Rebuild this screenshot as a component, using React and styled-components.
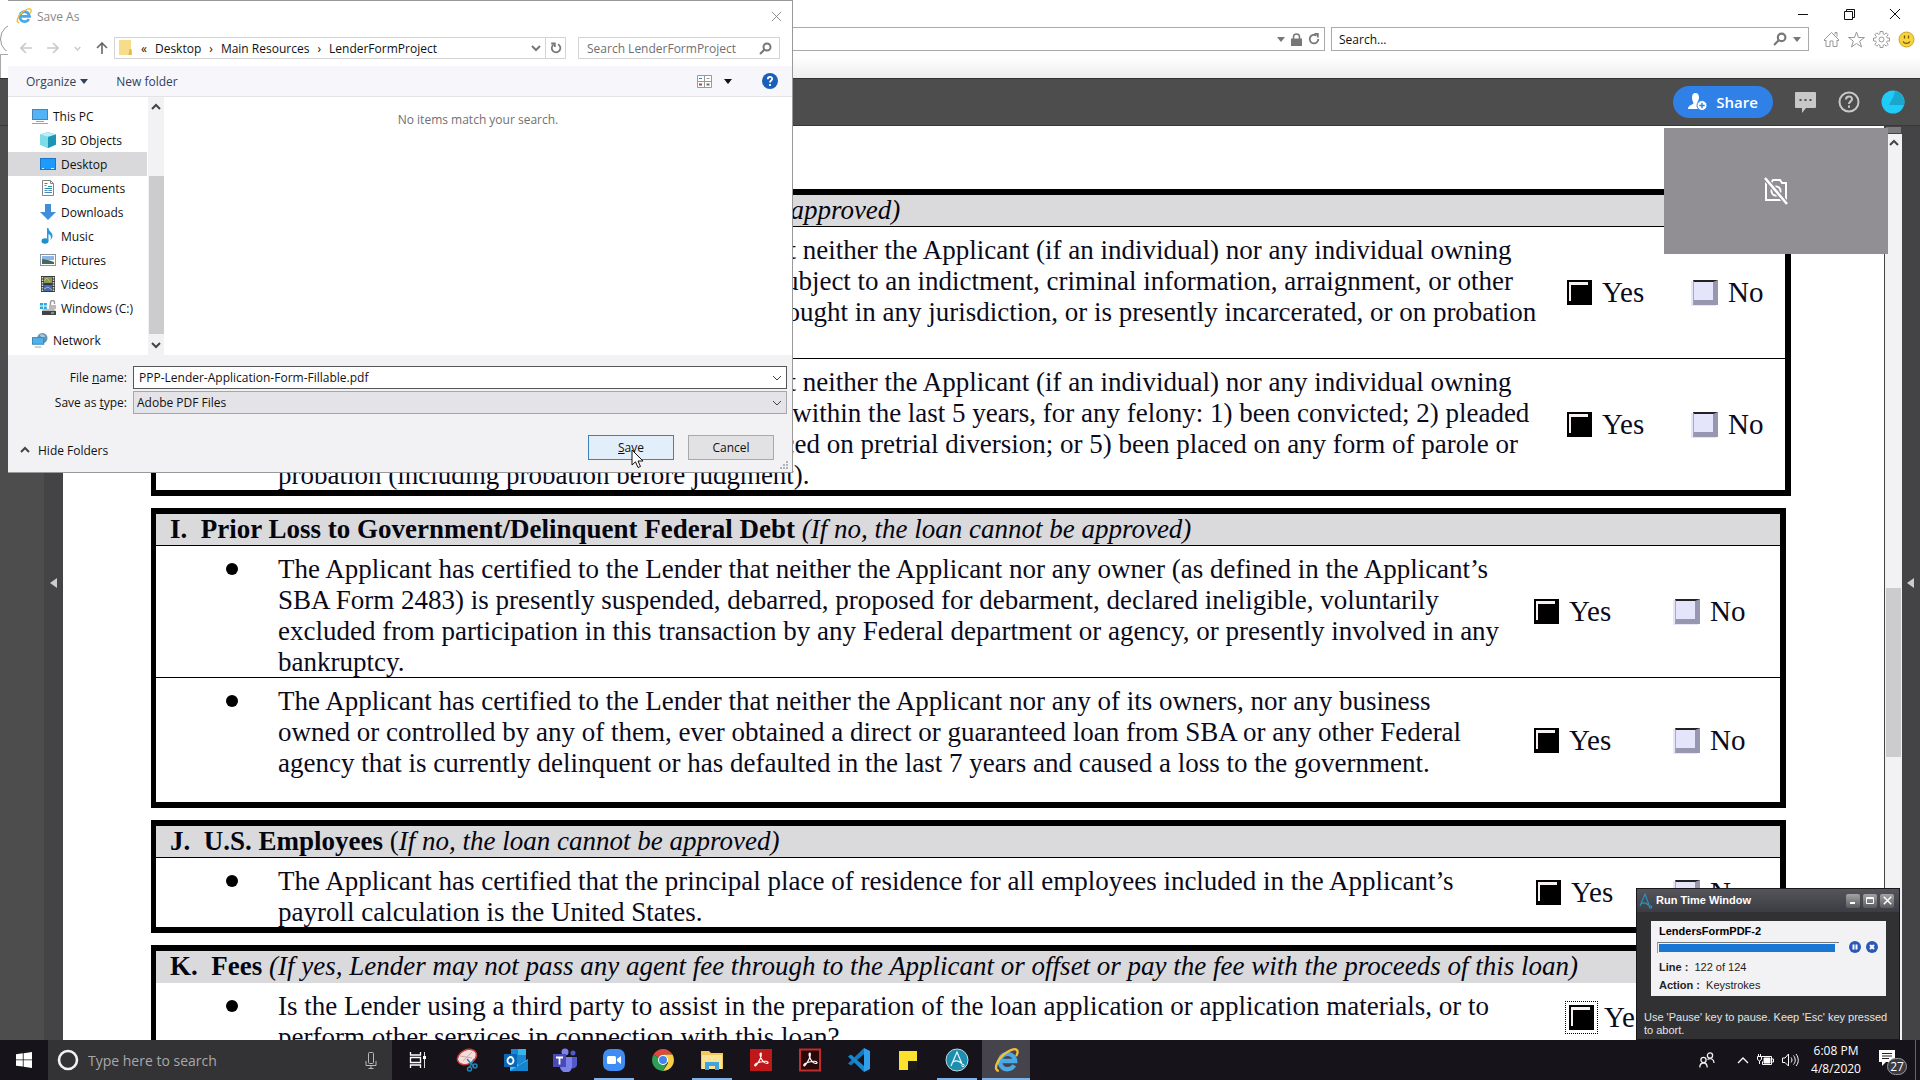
import styled, { createGlobalStyle, css } from "styled-components";

const GlobalStyle = createGlobalStyle`
  * {
    box-sizing: border-box;
  }

  body {
    margin: 0;
    overflow: hidden;
    background: #4d4d4d;
  }

  button,
  input,
  select {
    font: inherit;
    color: inherit;
    margin: 0;
    padding: 0;
    border: none;
    border-radius: 0;
    background: none;
    outline: none;
  }
`;

const uiFont = `"Open Sans", "Noto Sans", sans-serif`;

/* ---------- browser ---------- */

const Screen = styled.div`
  position: relative;
  display: flex;
  flex-direction: column;
  height: 100vh;
  overflow: hidden;
  font-family: ${uiFont};
  font-size: 12px;
`;

const TitleBar = styled.header`
  display: flex;
  justify-content: flex-end;
  height: 27px;
  padding-right: 2px;
  background: #fff;
`;

const WindowButton = styled.button`
  display: grid;
  place-items: center;
  width: 46px;
  height: 28px;
`;

const AddressRow = styled.div`
  display: flex;
  align-items: center;
  gap: 6px;
  height: 24px;
  padding-right: 4px;
  background: #fff;
`;

const BackButton = styled.button`
  width: 32px;
  height: 32px;
  flex: none;
  border: 1px solid #999;
  border-radius: 50%;
`;

const AddressBox = styled.div`
  display: flex;
  flex: ${(props) => props.$grow || "none"};
  width: ${(props) => props.$width || "auto"};
  align-items: center;
  justify-content: flex-end;
  gap: 6px;
  height: 24px;
  padding: 0 ${(props) => (props.$grow ? "4px" : "7px")};
  border: 1px solid #aaa;
  background: #fff;
`;

const AddressInput = styled.input`
  flex: 1;
  min-width: 0;

  &::placeholder {
    color: #111;
    opacity: 1;
  }
`;

const BrowserTools = styled.div`
  display: flex;
  gap: 5px;
  margin-left: 6px;
`;

const ToolButton = styled.button`
  display: grid;
  place-items: center;
  width: 20px;
  height: 24px;
`;

const TabStrip = styled.div`
  height: 27px;
  padding-top: 3px;
  background: linear-gradient(#fff 20%, #eeeeef);
`;

const BrowserTab = styled.div`
  width: 260px;
  height: 24px;
  border: 1px solid #aaa;
  border-bottom: none;
  background: #fff;
`;

const ViewerBar = styled.div`
  display: flex;
  align-items: center;
  justify-content: flex-end;
  height: 48px;
  padding-right: 15px;
  border-top: 1px solid #333;
  border-bottom: 1px solid #383838;
  background: #4d4d4d;
`;

const ShareButton = styled.button`
  display: flex;
  align-items: center;
  justify-content: center;
  gap: 8px;
  width: 100px;
  height: 32px;
  margin-right: 20px;
  border-radius: 16px;
  background: #2f80e7;
  color: #fff;
  font-size: 15px;
  font-weight: 600;
`;

const BarButton = styled.button`
  display: grid;
  place-items: center;
  width: 24px;
  height: 24px;
  margin-right: 20px;

  &:last-child {
    margin-right: 0;
  }
`;

/* ---------- document ---------- */

const Viewer = styled.div`
  display: flex;
  flex: 1;
  min-height: 0;
`;

const Rail = styled.div`
  display: flex;
  align-items: center;
  justify-content: flex-end;
  flex: none;
  width: ${(props) => props.$width};
  padding-right: 6px;
  background: ${(props) => props.$bg || "#444446"};
`;

const Page = styled.main`
  flex: 1;
  min-width: 0;
  overflow: hidden;
  padding: 63px 93px 0 88px;
  border-right: 1px solid #444;
  background: #fff;
  color: #0a0a1c;
  font-family: "Liberation Serif", serif;
  font-size: 27px;
  line-height: 31px;
`;

const Section = styled.section`
  margin: 0 ${(props) => (props.$wide ? "0" : "5px")} 12px 0;
  border: 6px solid #000;
  border-left-width: 5px;
`;

const SectionTitle = styled.h2`
  height: 32px;
  margin: 0;
  padding-left: 14px;
  border-bottom: ${(props) => (props.$plain ? "none" : "1px solid #000")};
  background: #dadadc;
  font-size: 27px;
  font-weight: 700;
  line-height: 31px;
  white-space: pre;
  color: #05050f;

  em,
  span {
    font-weight: 400;
  }
`;

const Statement = styled.div`
  position: relative;
  display: flex;
  align-items: center;
  justify-content: space-between;
  min-height: ${(props) => props.$minHeight || "0"};

  & + & {
    border-top: 1px solid #000;
  }

  &::before {
    content: "";
    position: absolute;
    top: 17px;
    left: 70px;
    width: 12px;
    height: 12px;
    border-radius: 50%;
    background: #000;
  }
`;

const StatementText = styled.p`
  align-self: flex-start;
  margin: 0 0 -1px;
  padding: 8px 0 0 122px;
  white-space: nowrap;
`;

const Choices = styled.div`
  display: grid;
  flex: none;
  grid-template-columns: ${(props) => props.$columns};
  font-size: 29px;
`;

const Choice = styled.label`
  display: flex;
  align-items: center;
  gap: 10px;
`;

const Check = styled.input`
  appearance: none;
  width: 25px;
  height: 25px;
  border: solid #9797b2;
  border-width: 2px 5px 5px 1px;
  border-top-color: #222;
  border-left-color: #a9a9c0;
  background: #e4e4fb;
  box-shadow: -2px 1px 0 #e6e6fa;

  &:checked {
    border-color: #000;
    border-width: 2px 4px 4px 2px;
    background: #000;
    box-shadow: inset 2px 3px 0 #f8f0f0;
  }

  ${(props) =>
    props.$focused &&
    css`
      outline: 1px dotted #000;
      outline-offset: 3px;
    `}
`;

const ScrollTrack = styled.div`
  display: flex;
  flex-direction: column;
  align-items: center;
  flex: none;
  width: ${(props) => props.$width};
  background: #f2f1f4;
`;

const SplitBox = styled.div`
  align-self: stretch;
  height: 8px;
  margin-bottom: 4px;
  border: 1px solid #444;
  background: #7b7b7b;
`;

const ScrollThumb = styled.div`
  width: 15px;
  height: ${(props) => props.$height};
  margin-top: ${(props) => props.$top};
  background: #cccbcd;
`;

/* ---------- save dialog ---------- */

const Dialog = styled.section`
  position: absolute;
  top: 0;
  left: 8px;
  display: flex;
  flex-direction: column;
  width: 785px;
  height: 473px;
  border: 1px solid #999;
  border-left: none;
  background: #fff;
  color: #111;
`;

const DialogTitle = styled.div`
  display: flex;
  align-items: center;
  gap: 5px;
  height: 30px;
  margin-bottom: 6px;
  padding: 0 8px;
  color: #888;
`;

const CloseButton = styled.button`
  display: grid;
  place-items: center;
  width: 16px;
  height: 16px;
  margin-left: auto;
`;

const PathRow = styled.div`
  display: flex;
  align-items: center;
  height: 22px;
  margin-bottom: 7px;
  padding-right: 12px;
`;

const NavButtons = styled.div`
  display: flex;
  align-items: center;
  justify-content: space-between;
  width: 106px;
  padding: 0 6px 0 12px;
`;

const IconButton = styled.button`
  display: grid;
  place-items: center;
`;

const PathBox = styled.div`
  display: flex;
  flex: 1;
  align-items: center;
  gap: 8px;
  height: 22px;
  margin-right: 12px;
  padding-left: 4px;
  border: 1px solid #d4d4d6;
`;

const PathEnd = styled.div`
  display: flex;
  align-items: center;
  margin-left: auto;
`;

const Refresh = styled.button`
  display: grid;
  place-items: center;
  width: 20px;
  height: 20px;
  margin-left: 4px;
  border-left: 1px solid #d4d4d6;
`;

const SearchBox = styled.label`
  display: flex;
  align-items: center;
  width: 202px;
  height: 22px;
  padding: 0 7px 0 8px;
  border: 1px solid #d4d4d6;

  input {
    flex: 1;
    min-width: 0;
  }

  input::placeholder {
    color: #707074;
    opacity: 1;
  }
`;

const CommandBar = styled.div`
  display: flex;
  align-items: center;
  height: 31px;
  padding: 0 14px 0 18px;
  border-bottom: 1px solid #e4e4e6;
  background: #f7f6fa;
  color: #33405c;
`;

const Command = styled.button`
  display: flex;
  align-items: center;
  gap: ${(props) => props.$gap || "4px"};
  margin-right: ${(props) => props.$after || "0"};
`;

const Spacer = styled.div`
  flex: 1;
`;

const Browse = styled.div`
  display: flex;
  flex: 1;
  min-height: 0;
`;

const Tree = styled.nav`
  width: 140px;
  padding: 7px 1px 0 0;
`;

const TreeItem = styled.a`
  display: flex;
  align-items: center;
  gap: 5px;
  height: 24px;
  margin-top: ${(props) => (props.$spaced ? "8px" : "0")};
  padding-left: ${(props) => (props.$top ? "24px" : "32px")};
  background: ${(props) => (props.$active ? "#d9d9db" : "none")};
  color: inherit;
  text-decoration: none;
  white-space: nowrap;
`;

const FileList = styled.div`
  flex: 1;
  padding-top: 14px;
  text-align: center;
  color: #707074;

  p {
    margin: 0;
  }
`;

const Footer = styled.div`
  height: 117px;
  padding: 11px 5px 0 0;
  background: #f2f1f4;
`;

const Field = styled.div`
  position: relative;
  display: flex;
  align-items: center;
  margin-bottom: 2px;

  label {
    width: 125px;
    padding-right: 6px;
    text-align: right;
  }

  svg {
    position: absolute;
    top: 7px;
    right: 5px;
    pointer-events: none;
  }
`;

const FileInput = styled.input`
  flex: 1;
  height: 23px;
  padding-left: 5px;
  border: 1px solid #555;
  background: #fff;
`;

const TypeSelect = styled.select`
  flex: 1;
  height: 23px;
  padding-left: 3px;
  appearance: none;
  border: 1px solid #a6a6aa;
  background: #e4e3e8;
`;

const DialogActions = styled.div`
  display: flex;
  align-items: flex-start;
  gap: 14px;
  padding: 19px 13px 0 12px;
`;

const DialogButton = styled.button`
  width: 86px;
  height: 25px;
  border: 1px solid ${(props) => (props.$primary ? "#3b82bd" : "#a9a9ad")};
  background: ${(props) => (props.$primary ? "#e2effb" : "#e2e1e4")};
`;

const HideFolders = styled.button`
  display: flex;
  align-items: center;
  gap: 8px;
  height: 30px;
  margin-right: auto;
`;

const Grip = styled.svg`
  position: absolute;
  right: 3px;
  bottom: 2px;
`;

const Pointer = styled.svg`
  position: absolute;
  top: 449px;
  left: 631px;
`;

/* ---------- overlays ---------- */

const CameraPanel = styled.aside`
  position: absolute;
  top: 128px;
  right: 32px;
  display: grid;
  place-items: center;
  width: 224px;
  height: 126px;
  background: #918f94;
`;

const RunWindow = styled.aside`
  position: absolute;
  right: 20px;
  bottom: 40px;
  width: 264px;
  height: 152px;
  border: 1px solid #18181a;
  background: #313133;
  color: #e4e4e4;
  font-family: "Liberation Sans", sans-serif;
  font-size: 11px;
  line-height: 13px;
`;

const RunTitle = styled.div`
  display: flex;
  align-items: center;
  gap: 3px;
  height: 23px;
  padding: 0 5px 0 2px;
  background: linear-gradient(#55555b, #3c3c44);
  color: #fff;
  font-weight: 700;
`;

const RunTitleText = styled.span`
  flex: 1;
`;

const RunButton = styled.button`
  display: grid;
  place-items: center;
  width: 14px;
  height: 14px;
  border-radius: 2px;
  background: linear-gradient(#a4a4a6, #5a5a5e);
`;

const RunPanel = styled.div`
  display: flex;
  flex-direction: column;
  gap: 5px;
  height: 75px;
  margin: 9px 13px 15px 14px;
  padding: 4px 8px 0;
  background: #f2f1f4;
  color: #222;
`;

const RunName = styled.strong`
  color: #000;
`;

const ProgressRow = styled.div`
  display: flex;
  align-items: center;
  gap: 5px;
  height: 10px;
  margin: -1px 0 4px;
`;

const ProgressTrack = styled.div`
  flex: 1;
  height: 11px;
  margin: 0 5px 0 -2px;
  padding: 1px;
  border-top: 1px solid #777;
  border-left: 1px solid #999;
`;

const ProgressFill = styled.div`
  height: 8px;
  background: #1976d2;
`;

const RunNote = styled.p`
  margin: 0;
  padding-left: 7px;
  white-space: nowrap;
`;

/* ---------- taskbar ---------- */

const Taskbar = styled.footer`
  display: flex;
  flex: none;
  height: 40px;
  background: #16131b;
  color: #fff;
`;

const StartButton = styled.button`
  display: grid;
  place-items: center;
  width: 48px;
`;

const TaskSearch = styled.label`
  display: flex;
  align-items: center;
  gap: 9px;
  width: 344px;
  margin-right: 2px;
  padding: 0 15px 0 9px;
  background: #333335;
  font-size: 14px;

  input {
    flex: 1;
    min-width: 0;
  }

  input::placeholder {
    color: #a8a8aa;
    opacity: 1;
  }
`;

const Apps = styled.div`
  display: flex;
  flex: 1;
  gap: 1px;
`;

const AppButton = styled.button`
  position: relative;
  display: grid;
  place-items: center;
  width: 48px;
  height: 40px;
  background: ${(props) => (props.$active ? "#45434b" : "none")};

  ${(props) =>
    props.$open &&
    css`
      &::after {
        content: "";
        position: absolute;
        right: ${props.$active ? "0" : "4px"};
        bottom: 0;
        left: ${props.$active ? "0" : "4px"};
        height: 2px;
        background: #7db2ea;
      }
    `}
`;

const Tray = styled.div`
  display: flex;
  align-items: center;
  gap: 8px;
  border-right: 1px solid #666;
  margin-right: 4px;
  padding-right: 9px;
`;

const Clock = styled.div`
  width: 60px;
  margin: 0 4px 0 -1px;
  text-align: center;
  line-height: 18px;
`;

const People = styled.div`
  display: grid;
  margin-right: 14px;
`;

const Notify = styled.button`
  position: relative;
  width: 28px;
  height: 28px;
  text-align: left;
`;

const Badge = styled.span`
  position: absolute;
  right: -1px;
  bottom: -1px;
  width: 20px;
  height: 17px;
  border: 1px solid #999;
  border-radius: 9px;
  background: #3a3a40;
  font-size: 12px;
  line-height: 15px;
  text-align: center;
`;

/* ---------- icons ---------- */

const Chevron = ({ up, size = 10, color = "#444", width = 1 }) => (
  <svg width={size} height={size} viewBox="0 0 10 10" fill="none" stroke={color} strokeWidth={width}>
    <path d={up ? "M1 7l4-4 4 4" : "M1 3l4 4 4-4"} />
  </svg>
);

const Triangle = ({ color = "#33405c" }) => (
  <svg width="8" height="5" viewBox="0 0 8 5" fill={color}>
    <path d="M0 0h8L4 5z" />
  </svg>
);

const SideArrow = () => (
  <svg width="7" height="10" viewBox="0 0 7 10" fill="#ccc">
    <path d="M7 0v10L0 5z" />
  </svg>
);

const Cross = ({ size = 12, color = "#888", width = 1 }) => (
  <svg width={size} height={size} viewBox="0 0 12 12" stroke={color} strokeWidth={width}>
    <path d="M1 1l10 10M11 1L1 11" />
  </svg>
);

const Magnifier = ({ size = 13, color = "#777" }) => (
  <svg width={size} height={size} viewBox="0 0 13 13" fill="none" stroke={color} strokeWidth="2">
    <circle cx="8" cy="5" r="3.5" />
    <path d="M5.5 7.5L1 12" />
  </svg>
);

const ReloadIcon = ({ color = "#777" }) => (
  <svg width="12" height="12" viewBox="0 0 12 12" fill="none" stroke={color} strokeWidth="1.8">
    <path d="M8.500 2.600A4.300 4.300 0 1 0 10.300 6" />
    <path d="M6.400 0.800h3.400v3.600" />
  </svg>
);

const RefreshIcon = () => (
  <svg width="12" height="12" viewBox="0 0 12 12" fill="none" stroke="#777" strokeWidth="1.800">
    <path d="M3.500 2.600A4.300 4.300 0 1 0 8 2.200" />
    <path d="M1.200 1.500h3.600v3.600" />
  </svg>
);

const IeIcon = ({ size }) => (
  <svg width={size} height={size} viewBox="0 0 26 26" fill="none">
    <path d="M21 18a8 8 0 1 1 1-4.500H8" stroke="#4aa9e4" strokeWidth="4.500" />
    <path d="M5 24C-1 23 3 13 10 7S25-1 24.500 4.500c0 1.500-.5 2.500-1.500 4" stroke="#f3c03c" strokeWidth="2.400" />
  </svg>
);

const ArrowIcon = ({ d, color }) => (
  <svg width="12" height="12" viewBox="0 0 12 12" fill="none" stroke={color} strokeWidth="1.600">
    <path d={d} />
  </svg>
);

const MonitorIcon = ({ desktop }) =>
  desktop ? (
    <svg width="16" height="14" viewBox="0 0 16 14">
      <rect x="0.500" y="1.500" width="15" height="11" fill="#1e9bff" stroke="#1976c8" />
      <path d="M2 11.500h2M11 11.500h3" stroke="#d8efff" />
    </svg>
  ) : (
    <svg width="16" height="16" viewBox="0 0 16 16">
      <rect x="0.500" y="1.500" width="15" height="10" fill="#52b4f6" stroke="#4a83ad" />
      <path d="M4 13.500h8M0 15.500h16" stroke="#8fa5b5" />
    </svg>
  );

const CubeIcon = () => (
  <svg width="16" height="16" viewBox="0 0 16 16">
    <path d="M8 0l8 2.500v10L8 16l-8-3.500v-10z" fill="#2bb3cf" />
    <path d="M0 2.500L8 5v11l-8-3.500z" fill="#7fdbe8" />
    <path d="M0 2.500L8 0l8 2.500L8 5z" fill="#bdeef4" />
    <path d="M8 5l8-2.500v10L8 16z" fill="#1b95b4" />
  </svg>
);

const DocumentIcon = () => (
  <svg width="16" height="16" viewBox="0 0 16 16">
    <path d="M2.500.500h8l3 3v12h-11z" fill="#fff" stroke="#858585" />
    <path d="M10.500.500v3h3" fill="none" stroke="#858585" />
    <path d="M4.500 3.500h3M4.500 5.500h2M8 6.500h4M4.500 8.500h7.500" stroke="#2b8fa8" />
    <path d="M4.500 10.500h3M8.500 10.500H12M4.500 12.500h7.500" stroke="#4e8ac0" />
  </svg>
);

const DownloadIcon = () => (
  <svg width="16" height="16" viewBox="0 0 16 16">
    <path d="M5 0h6v8h5l-8 8-8-8h5z" fill="#3f8edb" />
  </svg>
);

const MusicIcon = () => (
  <svg width="16" height="16" viewBox="0 0 16 16">
    <ellipse cx="5" cy="13" rx="3.500" ry="2.800" fill="#1d8fcf" />
    <path d="M7 0h1.500c0 3.500 4.500 4 4 8.500-.3 1.500-1 2.500-2 3.500 1-3.500 0-5-2-6v7H7z" fill="#2a9ad8" />
  </svg>
);

const PictureIcon = () => (
  <svg width="16" height="12" viewBox="0 0 16 12">
    <rect x="0.500" y="0.500" width="15" height="11" fill="#fff" stroke="#8a94a0" />
    <rect x="2" y="2" width="12" height="4" fill="#8db5e8" />
    <path d="M2 5l6 1 6 2v2H2z" fill="#45695f" />
  </svg>
);

const VideoIcon = () => (
  <svg width="16" height="16" viewBox="-1 0 16 16">
    <rect width="14" height="16" fill="#3a3a3c" />
    <path d="M1.500 1v14M12.500 1v14" stroke="#ddd" strokeWidth="1.500" strokeDasharray="1.500 1" />
    <rect x="3" y="1" width="8" height="6" fill="#8a9a50" />
    <rect x="3" y="9" width="8" height="6" fill="#4167b8" />
    <path d="M3 5l3-3 3 4M3 13l4-2 4 3" stroke="#b4c07c" fill="none" />
  </svg>
);

const DriveIcon = () => (
  <svg width="16" height="16" viewBox="0 0 16 16">
    <path d="M0 3h3v2.500H0zM3.800 3h3v2.500h-3zM0 6.500h3V9H0zM3.800 6.500h3V9h-3z" fill="#25a8de" />
    <path d="M10.500 5V2.500a2 2 0 0 1 4 0V4" fill="none" stroke="#9a9a9a" strokeWidth="1.400" />
    <path d="M9 5h7v4H9zM3 9h11l2 2H2z" fill="#bbb" />
    <rect x="2" y="11" width="14" height="4" fill="#444" />
    <rect x="11" y="12.500" width="3" height="1" fill="#b6ecd0" />
  </svg>
);

const NetworkIcon = () => (
  <svg width="16" height="16" viewBox="0 0 17 16">
    <circle cx="11" cy="6" r="5.500" fill="#6792ad" />
    <path d="M8 3c2-2 5-1 6 1l-2 3z" fill="#a4cadb" />
    <rect x="0.500" y="5.500" width="12" height="7" fill="#4db0ef" stroke="#3d83b4" />
    <path d="M3 15.500h7" stroke="#8fa5b5" />
  </svg>
);

const AppIcon = ({ children }) => (
  <svg width="24" height="24" viewBox="0 0 24 24" fill="none">
    {children}
  </svg>
);

const AcrobatMark = () => (
  <path
    d="M12 5c-1.500 0-1 3 .5 6s4 4.500 5.500 4.500 1.500-2-1-2.200S8 14.500 6.500 16s-.5 2.500.6 1.400C9 15.500 13.500 8 12 5z"
    stroke="#fff"
    strokeWidth="1.200"
  />
);

const taskApps = [
  {
    name: "Task View",
    icon: (
      <AppIcon>
        <path d="M4.500 4v3h10V4M4.500 20v-3h10v3M4.500 9.500h10v5h-10z" stroke="#fff" strokeWidth="1.300" />
        <path d="M18.500 4v16" stroke="#ddd" />
        <path d="M17 8h3v3h-3z" fill="#fff" />
      </AppIcon>
    ),
  },
  {
    name: "Snipping Tool",
    icon: (
      <AppIcon>
        <ellipse cx="12" cy="9" rx="10" ry="7" transform="rotate(-25 12 9)" fill="#f3dedd" stroke="#c9413c" strokeWidth="1.500" />
        <path d="M5 8l12 2M8 13l9-9" stroke="#d0a8a8" />
        <path d="M12 11l7 8M19 11l-5 9" stroke="#2585b5" strokeWidth="1.500" />
        <circle cx="14.500" cy="21" r="2" stroke="#2585b5" strokeWidth="1.500" />
        <circle cx="20" cy="18" r="2" stroke="#2585b5" strokeWidth="1.500" />
      </AppIcon>
    ),
  },
  {
    name: "Outlook",
    icon: (
      <AppIcon>
        <path d="M7 1h15v16H7z" fill="#1b87d4" />
        <path d="M14 1h8v6h-8z" fill="#35b6ef" />
        <path d="M6 12l9 5 9-6v12H6z" fill="#42bdf0" />
        <path d="M6 23l18-11v11z" fill="#1683ce" />
        <rect y="6" width="13" height="13" fill="#0b66b5" />
        <ellipse cx="6.500" cy="12.500" rx="3" ry="3.500" stroke="#fff" strokeWidth="1.800" />
      </AppIcon>
    ),
  },
  {
    name: "Teams",
    icon: (
      <AppIcon>
        <circle cx="12" cy="4" r="3.500" fill="#7b83eb" />
        <circle cx="20" cy="5" r="2.500" fill="#5059c9" />
        <path d="M15 9h9v7a4 4 0 0 1-7 3z" fill="#5059c9" />
        <path d="M6 9h13v9a6 6 0 0 1-12 1z" fill="#7b83eb" />
        <rect y="6" width="13" height="13" fill="#464bb5" />
        <path d="M3 9.500h7M6.500 9.500v7" stroke="#fff" strokeWidth="1.800" />
      </AppIcon>
    ),
  },
  {
    name: "Zoom",
    open: true,
    icon: (
      <AppIcon>
        <rect x="1" y="1" width="22" height="22" rx="7" fill="#3f8cf4" />
        <rect x="5" y="8" width="9" height="8" rx="1.500" fill="#fff" />
        <path d="M15 11l4-3v8l-4-3z" fill="#fff" />
      </AppIcon>
    ),
  },
  {
    name: "Chrome",
    icon: (
      <AppIcon>
        <path d="M12 12L2.500 6.500A11 11 0 0 1 21.500 6.500H12z" fill="#dc4a3d" />
        <path d="M12 12L2.500 6.500A11 11 0 0 0 12 23l4-8z" fill="#2f9e55" />
        <path d="M12 6.500h9.500A11 11 0 0 1 12 23l5-8z" fill="#f6cf46" />
        <circle cx="12" cy="12" r="5" fill="#fff" />
        <circle cx="12" cy="12" r="4" fill="#4286ec" />
      </AppIcon>
    ),
  },
  {
    name: "File Explorer",
    open: true,
    icon: (
      <AppIcon>
        <path d="M1 3h8l2 2h12v16H1z" fill="#f2c85c" />
        <path d="M2 7h20v14H2z" fill="#fbe394" />
        <path d="M5 14h14v8h-4v-4H9v4H5z" fill="#3fa3df" />
      </AppIcon>
    ),
  },
  {
    name: "Acrobat Reader",
    icon: (
      <AppIcon>
        <rect x="1" y="1" width="22" height="22" fill="#c01818" />
        <AcrobatMark />
      </AppIcon>
    ),
  },
  {
    name: "Acrobat DC",
    icon: (
      <AppIcon>
        <rect x="2" y="1.500" width="20" height="21" fill="#2a0808" stroke="#c12c2c" strokeWidth="2" />
        <AcrobatMark />
      </AppIcon>
    ),
  },
  {
    name: "Visual Studio Code",
    icon: (
      <AppIcon>
        <path d="M17 0l6 3v18l-6 3z" fill="#2fa0ec" />
        <path d="M17 0v6L4 17.500 1 15.500z" fill="#1479bf" />
        <path d="M17 24v-6L4 6.500 1 8.500z" fill="#1987d0" />
      </AppIcon>
    ),
  },
  {
    name: "Sticky Notes",
    icon: (
      <AppIcon>
        <path d="M3 3h18v19H3z" fill="#fbe12e" />
        <path d="M12 13h9v9z" fill="#fff27a" />
        <path d="M21 13v9h-9v-9h9l-9 9z" fill="#1b1b1b" />
      </AppIcon>
    ),
  },
  {
    name: "Automation Anywhere",
    open: true,
    icon: (
      <AppIcon>
        <circle cx="12" cy="12" r="11" fill="#1c8fae" stroke="#c6d6dc" />
        <path d="M6 18l6-14 5 12M8 14c3-2 7-1 9 2" stroke="#eaf6fa" strokeWidth="1.200" />
        <circle cx="18" cy="17.500" r="1.200" stroke="#eaf6fa" />
      </AppIcon>
    ),
  },
  { name: "Internet Explorer", open: true, active: true, icon: <IeIcon size={25} /> },
];

const treeItems = [
  { label: "This PC", icon: <MonitorIcon />, top: true },
  { label: "3D Objects", icon: <CubeIcon /> },
  { label: "Desktop", icon: <MonitorIcon desktop />, active: true },
  { label: "Documents", icon: <DocumentIcon /> },
  { label: "Downloads", icon: <DownloadIcon /> },
  { label: "Music", icon: <MusicIcon /> },
  { label: "Pictures", icon: <PictureIcon /> },
  { label: "Videos", icon: <VideoIcon /> },
  { label: "Windows (C:)", icon: <DriveIcon /> },
  { label: "Network", icon: <NetworkIcon />, top: true, spaced: true },
];

const sections = [
  {
    id: "H",
    title: "Character Determination",
    note: "(If no, the loan cannot be approved)",
    wide: true,
    columns: "126px 92px",
    rows: [
      {
        height: "131px",
        lines: [
          "The Applicant has certified\u00a0\u00a0 to the\u00a0\u00a0 Lender that neither the Applicant (if an individual) nor any individual owning",
          "20% or more of the equity of the Applicant is subject to an indictment, criminal information, arraignment, or other",
          "means by which formal criminal charges are brought in any jurisdiction, or is presently incarcerated, or on probation",
          "or parole.",
        ],
      },
      {
        height: "131px",
        lines: [
          "The Applicant has certified\u00a0\u00a0 to the\u00a0\u00a0 Lender that neither the Applicant (if an individual) nor any individual owning",
          "20% or more of the equity of the Applicant has within the last 5 years, for any felony: 1) been convicted; 2) pleaded",
          "guilty; 3) pleaded nolo contendere; 4) been placed on pretrial diversion; or 5) been placed on any form of parole or",
          "probation (including probation before judgment).",
        ],
      },
    ],
  },
  {
    id: "I",
    title: "Prior Loss to Government/Delinquent Federal Debt",
    note: "(If no, the loan cannot be approved)",
    columns: "141px 105px",
    rows: [
      {
        height: "131px",
        lines: [
          "The Applicant has certified to the Lender that neither the Applicant nor any owner (as defined in the Applicant’s",
          "SBA Form 2483) is presently suspended, debarred, proposed for debarment, declared ineligible, voluntarily",
          "excluded from participation in this transaction by any Federal department or agency, or presently involved in any",
          "bankruptcy.",
        ],
      },
      {
        height: "125px",
        lines: [
          "The Applicant has certified to the Lender that neither the Applicant nor any of its owners, nor any business",
          "owned or controlled by any of them, ever obtained a direct or guaranteed loan from SBA or any other Federal",
          "agency that is currently delinquent or has defaulted in the last 7 years and caused a loss to the government.",
        ],
      },
    ],
  },
  {
    id: "J",
    title: "U.S. Employees",
    noteOpen: "(",
    note: "If no, the loan cannot be approved)",
    columns: "139px 105px",
    rows: [
      {
        lines: [
          "The Applicant has certified that the principal place of residence for all employees included in the Applicant’s",
          "payroll calculation is the United States.",
        ],
      },
    ],
  },
  {
    id: "K",
    title: "Fees",
    note: "(If yes, Lender may not pass any agent fee through to the Applicant or offset or pay the fee with the proceeds of this loan)",
    plain: true,
    columns: "127px 84px",
    rows: [
      {
        focused: true,
        lines: [
          "Is the Lender using a third party to assist in the preparation of the loan application or application materials, or to",
          "perform other services in connection with this loan?",
        ],
      },
    ],
  },
];

function FormSection({ section }) {
  return (
    <Section $wide={section.wide}>
      <SectionTitle $plain={section.plain}>
        {section.id}.{"  "}
        {section.title} {section.noteOpen && <span>{section.noteOpen}</span>}
        <em>{section.note}</em>
      </SectionTitle>
      {section.rows.map((row, index) => (
        <Statement key={index} $minHeight={row.height}>
          <StatementText>
            {row.lines.map((line) => (
              <span key={line}>
                {line}
                <br />
              </span>
            ))}
          </StatementText>
          <Choices $columns={section.columns}>
            <Choice>
              <Check type="checkbox" defaultChecked $focused={row.focused} />
              Yes
            </Choice>
            <Choice>
              <Check type="checkbox" />
              No
            </Choice>
          </Choices>
        </Statement>
      ))}
    </Section>
  );
}

function Browser() {
  return (
    <>
      <TitleBar>
        <WindowButton aria-label="Minimize">
          <svg width="10" height="10" stroke="#111">
            <path d="M0 5.500h10" />
          </svg>
        </WindowButton>
        <WindowButton aria-label="Restore">
          <svg width="11" height="11" fill="none" stroke="#111">
            <path d="M0.500 2.500h8v8h-8zM2.500 2.500v-2h8v8h-2" />
          </svg>
        </WindowButton>
        <WindowButton aria-label="Close">
          <Cross color="#111" />
        </WindowButton>
      </TitleBar>
      <AddressRow>
        <BackButton aria-label="Back" />
        <AddressBox $grow="1">
          <AddressInput aria-label="Address" />
          <Triangle color="#777" />
          <svg width="11" height="13" viewBox="0 0 11 13">
            <path d="M2.500 6V4a3 3 0 0 1 6 0v2" fill="none" stroke="#777" strokeWidth="1.500" />
            <rect y="5.500" width="11" height="7.500" fill="#777" />
          </svg>
          <ReloadIcon />
        </AddressBox>
        <AddressBox $width="478px">
          <AddressInput aria-label="Search the web" placeholder="Search..." />
          <Magnifier size={14} />
          <Triangle color="#777" />
        </AddressBox>
        <BrowserTools>
          <ToolButton aria-label="Home">
            <svg width="17" height="17" viewBox="0 0 17 17" fill="none" stroke="#999">
              <path d="M1 9l7.500-7.500L16 9l-1 1-1-1v6.500h-4V10H7v5.500H3V9l-1 1zM12 3.500v-2h2v4" />
            </svg>
          </ToolButton>
          <ToolButton aria-label="Favorites">
            <svg width="17" height="17" viewBox="0 0 17 17" fill="none" stroke="#999">
              <path d="M8.500 1l2 5.500h6l-4.800 3.600 1.800 5.900-5-3.500-5 3.500 1.800-5.900L.5 6.500h6z" />
            </svg>
          </ToolButton>
          <ToolButton aria-label="Tools">
            <svg width="17" height="17" viewBox="0 0 17 17" fill="none" stroke="#999">
              <circle cx="8.500" cy="8.500" r="2.500" />
              <path d="M7 .5h3v2.200l1.600.7 1.600-1.600 2 2-1.600 1.600.7 1.600h2.200v3h-2.200l-.7 1.600 1.600 1.600-2 2-1.600-1.600-1.600.7v2.200H7v-2.200l-1.600-.7-1.600 1.600-2-2 1.600-1.600-.7-1.600H.5V7h2.200l.7-1.600-1.600-1.600 2-2 1.600 1.600L7 2.700z" />
            </svg>
          </ToolButton>
          <ToolButton aria-label="Send a smile">
            <svg width="17" height="17" viewBox="0 0 17 17" fill="none">
              <circle cx="8.500" cy="8.500" r="7.500" fill="#f8d33c" stroke="#c9a227" />
              <path d="M6.500 4.500v3M10.500 4.500v3M5 10.500c1.500 2.500 5.500 2.500 7 0" stroke="#6b5512" strokeWidth="1.300" />
            </svg>
          </ToolButton>
        </BrowserTools>
      </AddressRow>
      <TabStrip>
        <BrowserTab />
      </TabStrip>
      <ViewerBar>
        <ShareButton>
          <svg width="20" height="18" viewBox="0 0 20 18" fill="#fff">
            <path d="M7.500 0C10 0 11 2 11 4.500S10 8 9.500 9c0 1.500 1.500 2 2.500 2.500L10 16H0c0-4 5-4 5.500-6C5 8.500 4 7 4 4.500S5 0 7.500 0z" />
            <circle cx="14" cy="12.500" r="5" stroke="#2f80e7" />
            <path d="M14 9.800v5.400M11.300 12.500h5.400" stroke="#2f80e7" strokeWidth="1.400" />
          </svg>
          Share
        </ShareButton>
        <BarButton aria-label="Comments">
          <svg width="21" height="21" viewBox="0 0 21 21" fill="#c8c8c8">
            <path d="M1 0h19a1 1 0 0 1 1 1v14a1 1 0 0 1-1 1h-9l-4 5v-5H1a1 1 0 0 1-1-1V1a1 1 0 0 1 1-1z" />
            <path d="M4.500 7h2v2h-2zM9.500 7h2v2h-2zM14.500 7h2v2h-2z" fill="#4d4d4d" />
          </svg>
        </BarButton>
        <BarButton aria-label="Help">
          <svg width="22" height="22" viewBox="0 0 22 22" fill="none" stroke="#c8c8c8" strokeWidth="2">
            <circle cx="11" cy="11" r="9.500" />
            <path d="M8 8.500c0-4 6-4 6-.5 0 2.500-3 2.200-3 5M11 14.500v2.200" />
          </svg>
        </BarButton>
        <BarButton aria-label="Profile">
          <svg width="24" height="24" viewBox="0 0 24 24">
            <circle cx="12" cy="12" r="11.500" fill="#1fccf7" />
            <path d="M14 1a11.500 11.500 0 0 1 9 14H8c2-4 5-8 6-14z" fill="#1ba6cd" />
          </svg>
        </BarButton>
      </ViewerBar>
      <Viewer>
        <Rail $width="44px" $bg="#4d4d4d" />
        <Rail $width="19px">
          <SideArrow />
        </Rail>
        <Page>
          {sections.map((section) => (
            <FormSection key={section.id} section={section} />
          ))}
        </Page>
        <ScrollTrack $width="17px">
          <SplitBox />
          <Chevron up width={2} />
          <ScrollThumb $top="440px" $height="169px" />
        </ScrollTrack>
        <Rail $width="18px">
          <SideArrow />
        </Rail>
      </Viewer>
    </>
  );
}

function SaveDialog() {
  return (
    <Dialog role="dialog" aria-label="Save As">
      <DialogTitle>
        <IeIcon size={16} />
        Save As
        <CloseButton aria-label="Close dialog">
          <Cross size={11} />
        </CloseButton>
      </DialogTitle>
      <PathRow>
        <NavButtons>
          <IconButton aria-label="Back">
            <ArrowIcon d="M6 1L1 6l5 5M1 6h11" color="#c9c9cb" />
          </IconButton>
          <IconButton aria-label="Forward">
            <ArrowIcon d="M6 1l5 5-5 5M11 6H0" color="#c9c9cb" />
          </IconButton>
          <IconButton aria-label="Recent">
            <Chevron size={7} color="#c9c9cb" width={2} />
          </IconButton>
          <IconButton aria-label="Up">
            <ArrowIcon d="M1 6l5-5 5 5M6 1v11" color="#666" />
          </IconButton>
        </NavButtons>
        <PathBox>
          <svg width="14" height="16" viewBox="0 0 14 16">
            <path d="M0 0h12v10l1 1v4H0z" fill="#f7dc8c" />
            <path d="M10.500 9h2v6h-3z" fill="#e2b84b" />
          </svg>
          <span>«</span>
          <span>Desktop</span>
          <span>›</span>
          <span>Main Resources</span>
          <span>›</span>
          <span>LenderFormProject</span>
          <PathEnd>
            <Chevron color="#777" width={2} />
            <Refresh aria-label="Refresh">
              <RefreshIcon />
            </Refresh>
          </PathEnd>
        </PathBox>
        <SearchBox>
          <input aria-label="Search folder" placeholder="Search LenderFormProject" />
          <Magnifier />
        </SearchBox>
      </PathRow>
      <CommandBar>
        <Command $after="28px">
          Organize <Triangle />
        </Command>
        <Command>New folder</Command>
        <Spacer />
        <Command $after="30px" $gap="12px" aria-label="Change view">
          <svg width="15" height="13" viewBox="0 0 15 13" fill="#fff" stroke="#999">
            <path d="M.5.5h14v12H.5zM7.500.5v12M.5 6.500h14" />
            <path d="M2 3.500h3" stroke="#3d7fc4" />
            <path d="M9.500 3.500h3" />
            <path d="M2 9.500h3" stroke="#b04a33" strokeWidth="2" />
            <path d="M9.500 9.500h3" stroke="#5d7a52" strokeWidth="2" />
          </svg>
          <Triangle color="#111" />
        </Command>
        <Command aria-label="Help">
          <svg width="16" height="16" viewBox="0 0 16 16" fill="none" stroke="#fff" strokeWidth="1.800">
            <circle cx="8" cy="8" r="8" fill="#1a5fb8" stroke="none" />
            <path d="M5.800 6.200c0-3 4.400-3 4.400-.4C10.200 7.500 8 7.500 8 9.500M8 11v2" />
          </svg>
        </Command>
      </CommandBar>
      <Browse>
        <Tree>
          {treeItems.map((item) => (
            <TreeItem
              key={item.label}
              href="#"
              $top={item.top}
              $spaced={item.spaced}
              $active={item.active}
            >
              {item.icon}
              {item.label}
            </TreeItem>
          ))}
        </Tree>
        <ScrollTrack $width="16px">
          <Spacer />
          <Chevron up width={2} />
          <ScrollThumb $top="64px" $height="158px" />
          <Spacer />
          <Chevron width={2} />
          <Spacer />
        </ScrollTrack>
        <FileList>
          <p>No items match your search.</p>
        </FileList>
      </Browse>
      <Footer>
        <Field>
          <label htmlFor="file-name">
            File <u>n</u>ame:
          </label>
          <FileInput id="file-name" defaultValue="PPP-Lender-Application-Form-Fillable.pdf" />
          <Chevron />
        </Field>
        <Field>
          <label htmlFor="file-type">
            Save as <u>t</u>ype:
          </label>
          <TypeSelect id="file-type">
            <option>Adobe PDF Files</option>
          </TypeSelect>
          <Chevron />
        </Field>
        <DialogActions>
          <HideFolders>
            <Chevron up width={2} /> Hide Folders
          </HideFolders>
          <DialogButton $primary>
            <u>S</u>ave
          </DialogButton>
          <DialogButton>Cancel</DialogButton>
        </DialogActions>
      </Footer>
      <Grip width="9" height="9" fill="#b4b4b8">
        <path d="M6 0h2v2H6zM6 3h2v2H6zM3 3h2v2H3zM6 6h2v2H6zM3 6h2v2H3zM0 6h2v2H0z" />
      </Grip>
    </Dialog>
  );
}

function RunTimeWindow() {
  return (
    <RunWindow>
      <RunTitle>
        <svg width="14" height="16" viewBox="0 0 14 16" fill="none" stroke="#2593c0" strokeWidth="1.200">
          <path d="M1 13L6 1l4 11M2 11c3-2 6-1 8 2" />
          <circle cx="11.500" cy="14" r="1.200" />
        </svg>
        <RunTitleText>Run Time Window</RunTitleText>
        <RunButton aria-label="Minimize run window">
          <svg width="8" height="8" stroke="#fff" strokeWidth="2">
            <path d="M1 6h5" />
          </svg>
        </RunButton>
        <RunButton aria-label="Maximize run window">
          <svg width="8" height="8" stroke="#fff" fill="none">
            <path d="M.5.5h7v6h-7zM.5 1.500h7" />
          </svg>
        </RunButton>
        <RunButton aria-label="Close run window">
          <Cross size={9} color="#fff" width={2} />
        </RunButton>
      </RunTitle>
      <RunPanel>
        <RunName>LendersFormPDF-2</RunName>
        <ProgressRow>
          <ProgressTrack>
            <ProgressFill style={{ width: `${(122 / 124) * 100}%` }} />
          </ProgressTrack>
          <IconButton aria-label="Pause">
            <svg width="12" height="12" stroke="#fff" strokeWidth="2">
              <circle cx="6" cy="6" r="6" fill="#2a57b8" stroke="none" />
              <path d="M4.500 3.500v5M7.500 3.500v5" />
            </svg>
          </IconButton>
          <IconButton aria-label="Stop">
            <svg width="12" height="12" stroke="#fff" strokeWidth="2">
              <circle cx="6" cy="6" r="6" fill="#2a57b8" stroke="none" />
              <path d="M4 4l4 4M8 4L4 8" />
            </svg>
          </IconButton>
        </ProgressRow>
        <span>
          <b>Line :</b>&nbsp; 122 of 124
        </span>
        <span>
          <b>Action :</b>&nbsp; Keystrokes
        </span>
      </RunPanel>
      <RunNote>
        Use 'Pause' key to pause. Keep 'Esc' key pressed
        <br />
        to abort.
      </RunNote>
    </RunWindow>
  );
}

function TaskbarRow() {
  return (
    <Taskbar>
      <StartButton aria-label="Start">
        <svg width="16" height="16" viewBox="0 0 16 16" fill="#fff">
          <path d="M0 2.300l6.800-1v6.200H0zM7.600 1.200L16 0v7.500H7.600zM0 8.300h6.800v6.300L0 13.700zM7.600 8.300H16V16l-8.400-1.200z" />
        </svg>
      </StartButton>
      <TaskSearch>
        <svg width="22" height="22" viewBox="0 0 22 22" fill="none">
          <circle cx="11" cy="11" r="9" stroke="#f2f2f2" strokeWidth="2.600" />
        </svg>
        <input aria-label="Windows search" placeholder="Type here to search" />
        <svg width="12" height="17" viewBox="0 0 12 17" fill="none" stroke="#b8b8ba">
          <rect x="3.500" y="0.500" width="5" height="11" rx="1" />
          <path d="M1 9v4.500h10V9M6 13.500V16M3.500 16.500h5" />
        </svg>
      </TaskSearch>
      <Apps>
        {taskApps.map((app) => (
          <AppButton key={app.name} aria-label={app.name} $open={app.open} $active={app.active}>
            {app.icon}
          </AppButton>
        ))}
      </Apps>
      <Tray>
        <People>
          <svg width="16" height="16" viewBox="0 0 16 16" fill="none" stroke="#eee" strokeWidth="1.300">
            <circle cx="11" cy="3.500" r="2.600" />
            <circle cx="4.500" cy="8" r="2.600" />
            <path d="M.8 15.500c0-6 7.400-6 7.400 0M8.500 7.500c3-2 6.500-.5 6.500 3.500" />
          </svg>
        </People>
        <svg width="12" height="8" viewBox="0 0 12 8" fill="none" stroke="#fff" strokeWidth="1.300">
          <path d="M1 7l5-5 5 5" />
        </svg>
        <svg width="17" height="12" viewBox="0 0 17 12" fill="none" stroke="#fff">
          <path d="M4.500 2.500h10v8h-9v-3M14.500 5h2v3h-2" />
          <path d="M7 4h6v5H7z" fill="#fff" />
          <path d="M.5 2.500h4v3l-2 1.500-2-1.500zM1.500 0v2M3.500 0v2M2.500 7v3" />
        </svg>
        <svg width="17" height="14" viewBox="0 0 17 14" fill="none" stroke="#fff">
          <path d="M.5 5v4.500h2.500l3.500 3.500V1L3 5z" />
          <path d="M9 4.500c1.300 1.500 1.300 3.500 0 5M11.500 2.500c2.300 3 2.300 6.500 0 9M14 1c3 4 3 8.500 0 12" />
        </svg>
        <Clock>
          6:08 PM
          <br />
          4/8/2020
        </Clock>
        <Notify aria-label="Notifications">
          <svg width="18" height="18" viewBox="0 0 18 18" fill="#fff">
            <path d="M1 1h16v12H8l-4 4v-4H1z" />
            <path d="M4 4.500h10M4 7h10M4 9.500h7" stroke="#222" />
          </svg>
          <Badge>27</Badge>
        </Notify>
      </Tray>
    </Taskbar>
  );
}

function App() {
  return (
    <Screen>
      <GlobalStyle />
      <Browser />
      <TaskbarRow />
      <CameraPanel aria-label="Camera off">
        <svg width="24" height="28" viewBox="0 0 24 28" fill="none" stroke="#fff" strokeWidth="2">
          <path d="M2 6v17h20V6h-4l-2-3H9L7 6z" />
          <circle cx="12" cy="14" r="4.500" />
          <path d="M1 1l22 26" stroke="#918f94" strokeWidth="5" />
          <path d="M1 1l22 26" strokeWidth="2.500" />
        </svg>
      </CameraPanel>
      <RunTimeWindow />
      <SaveDialog />
      <Pointer width="13" height="20" viewBox="0 0 13 20">
        <path d="M1 1v15l3.500-3.200L7 18.500l2.500-1-2.500-5.500h5z" fill="#fff" stroke="#111" />
      </Pointer>
    </Screen>
  );
}

export default App;
